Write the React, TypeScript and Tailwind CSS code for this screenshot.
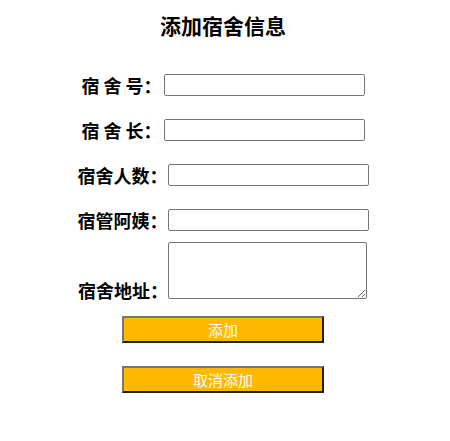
import { type FC } from "react"

interface FieldProps {
  label: string
  gap?: string
}

const Field: FC<FieldProps> = ({ label, gap = "gap-[2px]" }) => {
  return (
    <div className={`flex items-center justify-center h-[22px] ${gap}`}>
      <span className="text-[18px] font-bold leading-none text-black whitespace-pre">{label}</span>
      <input
        type="text"
        className="w-[201px] h-[22px] border border-[#767676] rounded-[2px] px-[2px] text-[13px] bg-white"
      />
    </div>
  )
}

const App: FC = () => {
  return (
    <div
      className="w-[446px] min-h-[441px] bg-white flex flex-col items-center"
      style={{ fontFamily: '"Noto Sans CJK SC", "Noto Sans", sans-serif' }}
    >
      <h3 className="mt-[15px] text-[21px] leading-[21px] font-bold text-black">添加宿舍信息</h3>

      <div className="mt-[38px] flex flex-col gap-[23px] w-full">
        <Field label="宿 舍 号：" />
        <Field label="宿 舍 长：" />
        <Field label="宿舍人数：" gap="gap-0" />
        <Field label="宿管阿姨：" gap="gap-0" />
      </div>

      <div className="mt-[11px] flex items-end justify-center w-full pr-[1px]">
        <span className="text-[18px] font-bold leading-none text-black">宿舍地址：</span>
        <textarea className="w-[199px] h-[57px] border border-[#767676] rounded-[2px] bg-white" />
      </div>

      <button className="mt-[17px] w-[202px] h-[27px] bg-[#ffb800] text-white text-[15px] leading-none border-2 border-t-[#767676] border-l-[#767676] border-b-[#1f1f1f] border-r-[#1f1f1f]">
        添加
      </button>
      <button className="mt-[23px] w-[202px] h-[27px] bg-[#ffb800] text-white text-[15px] leading-none border-2 border-t-[#767676] border-l-[#767676] border-b-[#1f1f1f] border-r-[#1f1f1f]">
        取消添加
      </button>
    </div>
  )
}

export default App
